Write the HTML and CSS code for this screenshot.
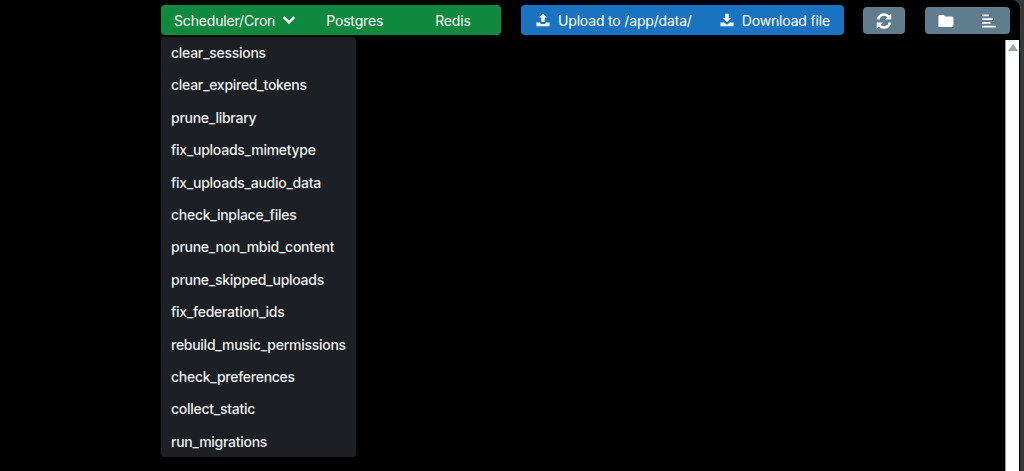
FILE: index.html
```html
<!DOCTYPE html>
<html lang="en">
<head>
<meta charset="utf-8">
<title>Containers</title>
<link rel="stylesheet" href="styles.css">
</head>
<body>
<div class="app">
  <header class="toolbar">
    <div class="dropdown-wrap">
      <div class="group group-green">
        <button class="btn btn-toggle">Scheduler/Cron
          <svg class="chevron" viewBox="0 0 14 10"><path d="M1.8 2.2 7 7.4l5.2-5.2" fill="none" stroke="currentColor" stroke-width="2.5"/></svg>
        </button>
        <button class="btn btn-wide">Postgres</button>
        <button class="btn btn-wide">Redis</button>
      </div>
      <ul class="menu">
        <li>clear_sessions</li>
        <li>clear_expired_tokens</li>
        <li>prune_library</li>
        <li>fix_uploads_mimetype</li>
        <li>fix_uploads_audio_data</li>
        <li>check_inplace_files</li>
        <li>prune_non_mbid_content</li>
        <li>prune_skipped_uploads</li>
        <li>fix_federation_ids</li>
        <li>rebuild_music_permissions</li>
        <li>check_preferences</li>
        <li>collect_static</li>
        <li>run_migrations</li>
      </ul>
    </div>
    <div class="group group-blue">
      <button class="btn btn-icon-text">
        <svg class="icon" viewBox="0 0 14 14"><path d="M7 0.6 11 4.6H8.7V8.8H5.3V4.6H3Z" fill="currentColor"/><path d="M0.4 9.4H4.2V10.1Q4.3 10.9 5.2 10.9H8.8Q9.7 10.9 9.8 10.1V9.4H13.6V12.4Q13.6 13.3 12.7 13.3H1.3Q0.4 13.3 0.4 12.4Z" fill="currentColor"/></svg>
        Upload to /app/data/</button>
      <button class="btn btn-icon-text">
        <svg class="icon" viewBox="0 0 14 14"><path d="M5.3 0.7H8.7V5H11L7 9.2 3 5H5.3Z" fill="currentColor"/><path d="M0.4 9.4H4.2L5.9 11Q7 11.8 8.1 11L9.8 9.4H13.6V12.4Q13.6 13.3 12.7 13.3H1.3Q0.4 13.3 0.4 12.4Z" fill="currentColor"/></svg>
        Download file</button>
    </div>
    <div class="group group-slate group-refresh">
      <button class="btn btn-square">
        <svg class="icon-refresh" viewBox="1 0.5 14 15"><path d="M2.4 6.6A5.8 5.8 0 0 1 12.4 3.8" fill="none" stroke="currentColor" stroke-width="2.4"/><path d="M14.8 0.8V6.6H9Z" fill="currentColor"/><path d="M13.6 9.4A5.8 5.8 0 0 1 3.6 12.2" fill="none" stroke="currentColor" stroke-width="2.4"/><path d="M1.2 15.2V9.4H7Z" fill="currentColor"/></svg>
      </button>
    </div>
    <div class="group group-slate group-tools">
      <button class="btn btn-tool">
        <svg class="icon-lg" viewBox="0 0 16 14"><path d="M1.6 1H5.6L7.2 2.6H14.2Q15.4 2.6 15.4 3.8V11.8Q15.4 13 14.2 13H1.6Q0.4 13 0.4 11.8V2.2Q0.4 1 1.6 1Z" fill="currentColor"/></svg>
      </button>
      <button class="btn btn-tool">
        <svg class="icon-lg" viewBox="0 0 16 14"><path d="M1 0.4H8V2.2H1ZM1 4.2H12V6H1ZM1 8H9.5V9.8H1ZM1 11.8H15V13.6H1Z" fill="currentColor"/></svg>
      </button>
    </div>
  </header>
  <main class="content">
    <div class="scrollbar"><span class="scroll-up"></span></div>
  </main>
</div>
</body>
</html>
```
FILE: styles.css
```css
* { box-sizing: border-box; }
html, body { height: 100%; }
body {
  margin: 0;
  background: #37383a;
  font-family: Inter, "Liberation Sans", sans-serif;
  font-size: 14px;
  overflow: hidden;
}
.app {
  width: 1020px;
  height: 471px;
  background: #000;
  border-top-right-radius: 8px;
  display: flex;
  flex-direction: column;
}
.toolbar {
  height: 40px;
  flex: none;
  padding: 5px 0 0 161px;
  display: flex;
  align-items: flex-start;
}
.dropdown-wrap { position: relative; }
.group {
  display: flex;
  height: 30px;
  border-radius: 4px;
}
.group-green { width: 340px; background: #0e893e; padding-right: 4px; }
.group-blue { width: 323px; margin-left: 20px; background: #1a73c0; }
.group-slate { height: 27px; margin-top: 2px; background: #5f7d8c; }
.group-refresh { width: 42px; margin-left: 19px; }
.group-tools { width: 85px; margin-left: 20px; }
.btn {
  border: 0;
  background: transparent;
  color: #fff;
  font: inherit;
  letter-spacing: -0.17px;
  display: flex;
  align-items: center;
  justify-content: center;
  padding: 0;
  white-space: nowrap;
}
.btn-toggle { padding: 0 4px 0 13px; gap: 7px; }
.btn-wide { padding: 0 26px; }
.btn-icon-text { padding: 0 13px 0 15px; gap: 8px; }
.btn-square { width: 100%; }
.btn-tool { width: 42.5px; }
.chevron { width: 14px; height: 10px; }
.icon { width: 14px; height: 14px; }
.icon-lg { width: 16px; height: 14px; }
.icon-refresh { width: 16px; height: 16px; }
.menu {
  position: absolute;
  top: 32px;
  left: 0;
  width: 195px;
  height: 420px;
  margin: 0;
  padding: 0;
  list-style: none;
  background: #1c1f23;
  border-radius: 4px;
  color: #eceef0;
  font-weight: 500;
  letter-spacing: -0.27px;
}
.menu li {
  height: 32.4px;
  padding: 0 10px;
  line-height: 32.4px;
  white-space: nowrap;
}
.content {
  flex: 1;
  display: flex;
  justify-content: flex-end;
  padding-right: 1px;
}
.scrollbar {
  width: 14px;
  background: #fff;
  border-left: 1px solid #9a9a9a;
  display: flex;
  justify-content: center;
  padding-top: 4px;
}
.scroll-up {
  width: 0;
  height: 0;
  border-left: 5px solid transparent;
  border-right: 5px solid transparent;
  border-bottom: 7px solid #a3a3a3;
}
```
